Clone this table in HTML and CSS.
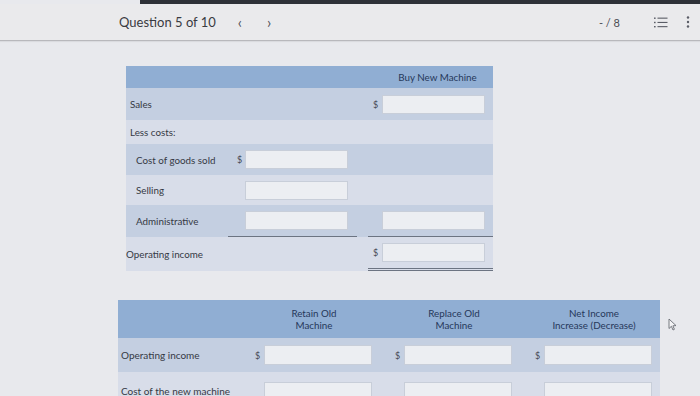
FILE: index.html
```html
<!DOCTYPE html>
<html>
<head>
<meta charset="utf-8">
<link rel="stylesheet" href="styles.css">
</head>
<body>
<div class="topedge"></div>
<header class="topbar">
  <div class="qtitle">Question 5 of 10</div>
  <div class="navarrows"><span class="arrow">&lsaquo;</span><span class="arrow">&rsaquo;</span></div>
  <div class="spacer"></div>
  <div class="score">- / 8</div>
  <svg class="listicon" width="14" height="11" viewBox="0 0 14 11"><g fill="#5a5d66"><rect x="0" y="0.5" width="1.6" height="1.4"/><rect x="0" y="4.8" width="1.6" height="1.4"/><rect x="0" y="9" width="1.6" height="1.4"/><rect x="3.5" y="0.6" width="10" height="1.1"/><rect x="3.5" y="4.9" width="10" height="1.1"/><rect x="3.5" y="9.1" width="10" height="1.1"/></g></svg>
  <svg class="kebab" width="4" height="12" viewBox="0 0 4 12"><g fill="#5a5d66"><circle cx="2" cy="1.5" r="1.2"/><circle cx="2" cy="6" r="1.2"/><circle cx="2" cy="10.5" r="1.2"/></g></svg>
</header>

<main class="content">
  <section class="t1">
    <div class="r1 head"><div class="c-label"></div><div class="c-a"></div><div class="gap"></div><div class="c-b hd">Buy New Machine</div></div>
    <div class="r1 dark h32"><div class="c-label p4">Sales</div><div class="c-a"></div><div class="gap"></div><div class="c-b"><span class="dol">$</span><span class="inp"></span></div></div>
    <div class="r1 light h24"><div class="c-label p4">Less costs:</div><div class="c-a"></div><div class="gap"></div><div class="c-b"></div></div>
    <div class="r1 dark h31"><div class="c-label p10">Cost of goods sold</div><div class="c-a"><span class="dol">$</span><span class="inp"></span></div><div class="gap"></div><div class="c-b"></div></div>
    <div class="r1 light h30"><div class="c-label p10">Selling</div><div class="c-a"><span class="dol"></span><span class="inp"></span></div><div class="gap"></div><div class="c-b"></div></div>
    <div class="r1 dark h32"><div class="c-label p10">Administrative</div><div class="c-a uline"><span class="dol"></span><span class="inp"></span></div><div class="gap"></div><div class="c-b uline"><span class="dol"></span><span class="inp"></span></div></div>
    <div class="r1 light h34"><div class="c-label">Operating income</div><div class="c-a"></div><div class="gap"></div><div class="c-b dline"><span class="dol">$</span><span class="inp"></span></div></div>
  </section>

  <section class="t2">
    <div class="r2 head2"><div class="c2-label"></div><div class="c2 hd">Retain Old<br>Machine</div><div class="c2 hd">Replace Old<br>Machine</div><div class="c2 hd">Net Income<br>Increase (Decrease)</div></div>
    <div class="r2 dark h34"><div class="c2-label">Operating income</div><div class="c2 cell"><span class="dol2">$</span><span class="inp2"></span></div><div class="c2 cell"><span class="dol2">$</span><span class="inp2"></span></div><div class="c2 cell"><span class="dol2">$</span><span class="inp2"></span></div></div>
    <div class="r2 light h34 top"><div class="c2-label lbl-low">Cost of the new machine</div><div class="c2 cell"><span class="dol2"></span><span class="inp2"></span></div><div class="c2 cell"><span class="dol2"></span><span class="inp2"></span></div><div class="c2 cell"><span class="dol2"></span><span class="inp2"></span></div></div>
  </section>
</main>

<svg class="cursor" width="9" height="13" viewBox="0 0 9 13"><path d="M1 1 L1 10.5 L3.4 8.3 L5 12 L6.4 11.3 L4.9 7.8 L8 7.6 Z" fill="#f4f4f6" stroke="#6a6d75" stroke-width="0.9" stroke-linejoin="round"/></svg>
</body>
</html>
```

FILE: styles.css
```css
* { box-sizing: border-box; }
html, body { margin: 0; padding: 0; }
body {
  width: 700px;
  height: 396px;
  overflow: hidden;
  background: #e8e9ed;
  font-family: Lato, "Open Sans", sans-serif;
  color: #353944;
  position: relative;
}
.topedge {
  height: 4px;
  margin-left: 140px;
  background: #2e3138;
}
.topbar {
  height: 37px;
  display: flex;
  align-items: center;
  padding: 0 10px 0 119px;
  background: #eaeaec;
  border-bottom: 1px solid #b8b8bc;
  box-shadow: 0 1px 1px rgba(0,0,0,0.06);
}
.qtitle { font-size: 13px; color: #3a3b41; }
.navarrows { display: flex; gap: 25px; margin-left: 22px; }
.arrow { font-size: 15px; color: #4e5058; line-height: 1; }
.spacer { flex: 1; }
.score { font-size: 11px; color: #4a4c53; margin-right: 34px; }
.listicon { margin-right: 18px; }

.content { padding-top: 25px; }

/* table 1 */
.t1 { margin-left: 126px; width: 367px; font-size: 9.8px; }
.r1 { display: flex; align-items: center; }
.c-label { width: 102px; white-space: nowrap; }
.c-a { width: 129px; height: 100%; display: flex; align-items: center; }
.gap { width: 11px; }
.c-b { width: 125px; height: 100%; display: flex; align-items: center; }
.p4 { padding-left: 4px; }
.p10 { padding-left: 10px; }
.head { height: 22px; background: #90aed3; }
.hd { justify-content: center; color: #26385a; font-size: 9.8px; padding-left: 14px; }
.dark { background: #c4cfe1; }
.light { background: #d8dde9; }
.h24 { height: 24px; } .h30 { height: 30px; } .h31 { height: 31px; }
.h32 { height: 32px; } .h33 { height: 33px; } .h34 { height: 34px; }
.c-a .dol { width: 17px; padding-left: 9px; }
.c-b .dol { width: 14px; padding-left: 5px; }
.dol { font-size: 9px; color: #444955; display: inline-block; }
.inp {
  display: inline-block;
  width: 103px;
  height: 19px;
  background: #eceef2;
  border: 1px solid #c8ced9;
}
.uline { border-bottom: 1px solid #6c7482; }
.dline { border-bottom: 3px double #6c7482; }

/* table 2 */
.t2 { margin-left: 118px; width: 542px; margin-top: 29px; font-size: 10px; }
.r2 { display: flex; align-items: center; }
.head2 { height: 38px; background: #90aed3; }
.c2-label { width: 122px; padding-left: 3px; white-space: nowrap; font-size: 10px; }
.c2 { width: 140px; height: 100%; display: flex; align-items: center; }
.head2 .c2 { justify-content: center; text-align: center; padding-left: 8px; line-height: 12px; color: #26385a; }
.cell .dol2 { width: 24px; padding-left: 15px; font-size: 9px; color: #444955; display: inline-block; }
.inp2 {
  display: inline-block;
  width: 108px;
  height: 20px;
  background: #eceef2;
  border: 1px solid #c8ced9;
}
.top { align-items: flex-start; padding-top: 6px; }
.lbl-low { padding-top: 7px; }

.cursor { position: absolute; left: 668px; top: 318px; }
```
